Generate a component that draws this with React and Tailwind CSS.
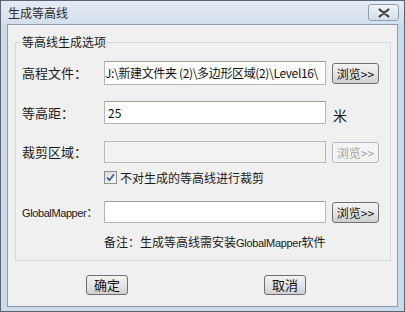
import React from "react";

function BrowseButton({ disabled }) {
  return (
    <button
      className={
        disabled
          ? "ml-[6px] w-[47px] h-[21px] rounded-[3px] border border-[#b5b9bd] bg-[#f4f4f4] text-[12px] leading-[19px] text-[#a3a3a3] flex items-center justify-center"
          : "ml-[6px] w-[47px] h-[21px] rounded-[3px] border border-[#707070] bg-gradient-to-b from-[#f3f3f3] via-[#e6e6e6] to-[#cfcfcf] text-[12px] leading-[19px] text-[#111] flex items-center justify-center"
      }
    >
      浏览&gt;&gt;
    </button>
  );
}

function Label({ children }) {
  return (
    <div className="w-[82px] shrink-0 text-[13px] leading-[16px] text-[#1a1a1a] whitespace-nowrap">
      {children}
    </div>
  );
}

export default function App() {
  return (
    <div className="w-[405px] h-[312px] flex flex-col border border-[#5d6670] bg-[#cbd9e8] font-['Noto_Sans_CJK_SC',sans-serif] overflow-hidden">
      {/* title bar */}
      <div className="h-[23px] shrink-0 flex items-center justify-between pl-[7px] pr-[5px] bg-gradient-to-b from-[#e4ecf5] to-[#d3dfec]">
        <span className="text-[12px] leading-[16px] text-[#2a2a2a]">生成等高线</span>
        <div className="w-[31px] h-[17px] rounded-[3px] border border-[#8f9cab] bg-gradient-to-b from-[#eef3f8] to-[#d2dce8] flex items-center justify-center">
          <svg width="14" height="10" viewBox="0 0 14 10">
            <path d="M2.5 1.5 L11.5 8.5 M11.5 1.5 L2.5 8.5" stroke="#ffffff" strokeWidth="4.4" strokeLinecap="round" />
            <path d="M2.5 1.5 L11.5 8.5 M11.5 1.5 L2.5 8.5" stroke="#454c55" strokeWidth="2.3" strokeLinecap="round" />
          </svg>
        </div>
      </div>

      {/* client area */}
      <div className="flex-1 mx-[6px] mb-[4px] border border-[#8e9bab] bg-[#f0f0f0] flex flex-col">
        <div className="ml-[7px] mt-[17px] w-[376px] border border-[#d3d8dc] pb-[9px] flex flex-col">
          <span className="self-start -mt-[9px] ml-[5px] px-[1px] bg-[#f0f0f0] text-[12px] leading-[16px] text-[#1a1a1a]">
            等高线生成选项
          </span>

          {/* row 1 */}
          <div className="mt-[11px] pl-[6px] h-[24px] flex items-center">
            <Label>高程文件：</Label>
            <div className="w-[222px] h-[24px] border border-[#b3b6bb] border-t-[#9ca0a6] bg-white overflow-hidden flex items-center">
              <span className="whitespace-nowrap text-[12px] leading-[16px] tracking-[-0.35px] text-[#111]">
                J:\新建文件夹 (2)\多边形区域(2)\Level16\
              </span>
            </div>
            <BrowseButton />
          </div>

          {/* row 2 */}
          <div className="mt-[16px] pl-[6px] h-[23px] flex items-center">
            <Label>等高距：</Label>
            <div className="w-[222px] h-[23px] border border-[#b3b6bb] border-t-[#9ca0a6] bg-white flex items-center pl-[3px]">
              <span className="text-[12px] leading-[16px] text-[#111]">25</span>
            </div>
            <span className="ml-[7px] mt-[5px] text-[14px] leading-[16px] text-[#1a1a1a]">米</span>
          </div>

          {/* row 3 */}
          <div className="mt-[17px] pl-[6px] h-[22px] flex items-center">
            <Label>裁剪区域：</Label>
            <div className="w-[222px] h-[22px] border border-[#b7b9bc] bg-[#f2f2f2]" />
            <BrowseButton disabled />
          </div>

          {/* checkbox row */}
          <div className="mt-[8px] pl-[88px] h-[13px] flex items-center">
            <div className="w-[13px] h-[13px] border border-[#8e8f8f] bg-gradient-to-br from-[#dcdcdc] to-[#fafafa] flex items-center justify-center">
              <svg width="9" height="9" viewBox="0 0 9 9">
                <path d="M1 4.5 L3.5 7.2 L8 1.2" fill="none" stroke="#3e5ea0" strokeWidth="1.8" />
              </svg>
            </div>
            <span className="ml-[3px] text-[12px] leading-[16px] text-[#1a1a1a]">
              不对生成的等高线进行裁剪
            </span>
          </div>

          {/* row 4 */}
          <div className="mt-[17px] pl-[6px] h-[22px] flex items-center">
            <Label>
              <span className="font-['Liberation_Sans',sans-serif] text-[11px] tracking-[-0.4px]">GlobalMapper</span>
              <span className="text-[12px]">：</span>
            </Label>
            <div className="w-[222px] h-[22px] border border-[#b3b6bb] border-t-[#9ca0a6] bg-white" />
            <BrowseButton />
          </div>

          {/* note */}
          <div className="mt-[11px] pl-[88px] text-[12px] leading-[16px] text-[#1a1a1a] whitespace-nowrap">
            备注：生成等高线需安装
            <span className="font-['Liberation_Sans',sans-serif] text-[11px] tracking-[-0.3px]">GlobalMapper</span>
            软件
          </div>
        </div>

        {/* bottom buttons */}
        <div className="mt-[14px] pl-[78px] flex items-center gap-[136px]">
          <button className="w-[42px] h-[20px] rounded-[3px] border border-[#707070] bg-gradient-to-b from-[#f3f3f3] via-[#e6e6e6] to-[#cfcfcf] text-[13px] leading-[16px] text-[#111] flex items-center justify-center">
            确定
          </button>
          <button className="w-[42px] h-[20px] rounded-[3px] border border-[#707070] bg-gradient-to-b from-[#f3f3f3] via-[#e6e6e6] to-[#cfcfcf] text-[13px] leading-[16px] text-[#111] flex items-center justify-center">
            取消
          </button>
        </div>
      </div>
    </div>
  );
}
